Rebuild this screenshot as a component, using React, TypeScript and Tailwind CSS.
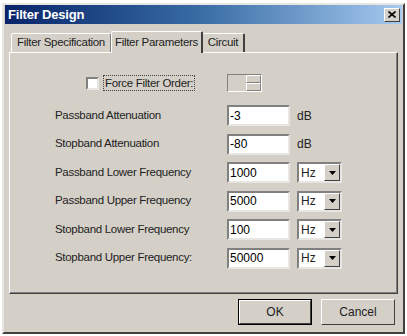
import React from 'react'

const font = { fontFamily: '"Liberation Sans", Arial, sans-serif' }

function Field({ value }: { value: string }) {
  return (
    <div className="w-[63px] h-[21px] bg-white border-2 border-t-[#808080] border-l-[#808080] border-r-[#e8e6e2] border-b-[#e8e6e2] flex items-center px-[1px] text-[12px] text-black">
      {value}
    </div>
  )
}

function Unit() {
  return (
    <div className="w-[45px] h-[21px] bg-white border-2 border-t-[#808080] border-l-[#808080] border-r-[#e8e6e2] border-b-[#e8e6e2] flex items-center justify-between pl-[2px] text-[12px]">
      <span>Hz</span>
      <div className="w-[16px] h-[17px] bg-[#d4d0c8] border border-t-white border-l-white border-r-[#404040] border-b-[#404040] flex items-center justify-center">
        <svg width="7" height="4" viewBox="0 0 7 4">
          <path d="M0 0h7L3.5 4z" fill="#000" />
        </svg>
      </div>
    </div>
  )
}

const rows = [
  { label: 'Passband Attenuation', value: '-3', unit: 'dB' },
  { label: 'Stopband Attenuation', value: '-80', unit: 'dB' },
  { label: 'Passband Lower Frequency', value: '1000', unit: 'hz' },
  { label: 'Passband Upper Frequency', value: '5000', unit: 'hz' },
  { label: 'Stopband Lower Frequency', value: '100', unit: 'hz' },
  { label: 'Stopband Upper Frequency:', value: '50000', unit: 'hz' },
]

export default function App() {
  return (
    <div className="w-[407px] h-[336px] bg-white overflow-hidden text-[#222] text-[11px]" style={font}>
      <div className="ml-[2px] mt-[3px] w-[403px] h-[331px] bg-[#d4d0c8] border-2 border-t-[#e8e6e2] border-l-[#e8e6e2] border-r-[#404040] border-b-[#404040] flex flex-col">
        {/* Title bar */}
        <div className="h-[19px] mx-[1px] bg-gradient-to-r from-[#0a246a] via-[#3a6ea5] to-[#a6caf0] flex items-center justify-between pl-[3px] pr-[2px]">
          <span className="text-white font-bold text-[13px] tracking-[-0.2px]">Filter Design</span>
          <div className="w-[16px] h-[14px] bg-[#d4d0c8] border border-t-white border-l-white border-r-[#404040] border-b-[#404040] flex items-center justify-center">
            <svg width="8" height="7" viewBox="0 0 8 7">
              <path d="M0.5 0.5L7.5 6.5M7.5 0.5L0.5 6.5" stroke="#000" strokeWidth="1.6" />
            </svg>
          </div>
        </div>

        {/* Tabs */}
        <div className="flex items-end pl-[7px] mt-[6px] h-[22px] whitespace-nowrap">
          <div className="w-[100px] h-[19px] flex items-center justify-center border-t border-l border-white border-r border-r-[#808080] rounded-t-[2px] text-[11.5px] tracking-[-0.3px]">
            Filter Specification
          </div>
          <div className="w-[92px] h-[22px] flex items-center justify-center border-t border-l border-white border-r-2 border-r-[#404040] rounded-t-[2px] text-[11.5px] tracking-[-0.3px] -mb-[1px] bg-[#d4d0c8] relative z-10">
            Filter Parameters
          </div>
          <div className="w-[42px] h-[19px] flex items-center justify-center border-t border-white border-r-2 border-r-[#404040] rounded-t-[2px] text-[11.5px] tracking-[-0.3px]">
            Circuit
          </div>
        </div>

        {/* Panel */}
        <div className="mx-[5px] h-[242px] border border-t-white border-l-white border-r-[#404040] border-b-[#404040] shadow-[inset_-1px_-1px_0_#808080] flex flex-col whitespace-nowrap">
          <div className="flex items-center h-[18px] mt-[21px]">
            <div className="w-[217px] flex items-center">
              <div className="w-[13px] h-[13px] bg-white border-2 border-t-[#808080] border-l-[#808080] border-r-[#e8e6e2] border-b-[#e8e6e2] ml-[76px]" />
              <div className="ml-[4px] px-[1px] border border-dotted border-[#444] text-[11.5px] tracking-[-0.3px] leading-[14px]">
                Force Filter Order:
              </div>
            </div>
            <div className="w-[35px] h-[18px] border border-t-[#808080] border-l-[#808080] border-r-white border-b-white flex justify-end">
              <div className="w-[15px] flex flex-col">
                <div className="flex-1 border border-t-white border-l-white border-r-[#808080] border-b-[#808080]" />
                <div className="flex-1 border border-t-white border-l-white border-r-[#808080] border-b-[#808080]" />
              </div>
            </div>
          </div>
          <div className="flex flex-col gap-[7.5px] mt-[13px]">
            {rows.map((r) => (
              <div key={r.label} className="flex items-center h-[21px]">
                <div className="w-[217px] pl-[45px] text-[11.5px] tracking-[-0.3px]">{r.label}</div>
                <Field value={r.value} />
                {r.unit === 'dB' ? (
                  <span className="ml-[7px] text-[12px]">dB</span>
                ) : (
                  <div className="ml-[7px]">
                    <Unit />
                  </div>
                )}
              </div>
            ))}
          </div>
        </div>

        {/* Buttons */}
        <div className="flex justify-end gap-[9px] mt-[5px] mr-[8px]">
          <div className="w-[74px] h-[26px] border border-black flex">
            <div className="flex-1 border border-t-white border-l-white border-r-[#404040] border-b-[#404040] flex items-center justify-center text-[12px]">
              OK
            </div>
          </div>
          <div className="w-[74px] h-[26px] border border-t-white border-l-white border-r-[#404040] border-b-[#404040] flex items-center justify-center text-[12px]">
            Cancel
          </div>
        </div>
      </div>
    </div>
  )
}
